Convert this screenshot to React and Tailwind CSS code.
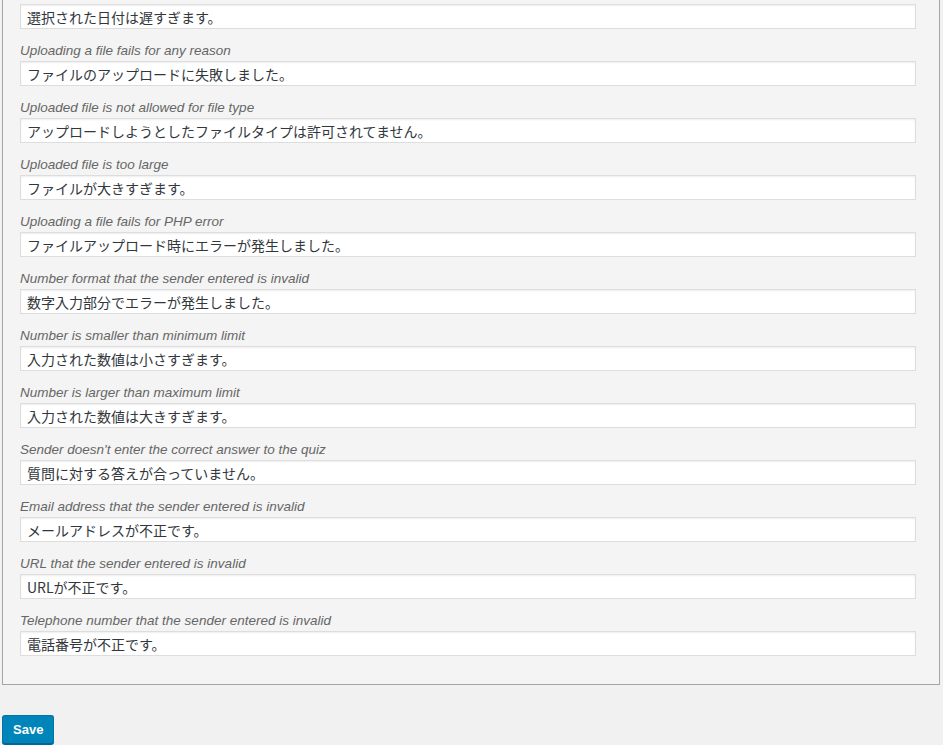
const messages = [
  { label: "", value: "選択された日付は遅すぎます。" },
  { label: "Uploading a file fails for any reason", value: "ファイルのアップロードに失敗しました。" },
  { label: "Uploaded file is not allowed for file type", value: "アップロードしようとしたファイルタイプは許可されてません。" },
  { label: "Uploaded file is too large", value: "ファイルが大きすぎます。" },
  { label: "Uploading a file fails for PHP error", value: "ファイルアップロード時にエラーが発生しました。" },
  { label: "Number format that the sender entered is invalid", value: "数字入力部分でエラーが発生しました。" },
  { label: "Number is smaller than minimum limit", value: "入力された数値は小さすぎます。" },
  { label: "Number is larger than maximum limit", value: "入力された数値は大きすぎます。" },
  { label: "Sender doesn't enter the correct answer to the quiz", value: "質問に対する答えが合っていません。" },
  { label: "Email address that the sender entered is invalid", value: "メールアドレスが不正です。" },
  { label: "URL that the sender entered is invalid", value: "URLが不正です。" },
  { label: "Telephone number that the sender entered is invalid", value: "電話番号が不正です。" },
];

export default function App() {
  return (
    <div className="min-h-[745px] bg-[#f1f1f1] pl-[2px] pr-[3px] font-['Liberation_Sans',sans-serif]">
      {/* Messages panel */}
      <div className="border-x border-b border-[#a6a6a6] bg-[#f4f4f4] pl-[17px] pr-[23px] pt-[4px] pb-[28px]">
        {messages.map((m, i) => (
          <div key={i}>
            {m.label && (
              <p className="mt-[12px] mb-[2px] h-[18px] text-[13.5px] leading-[19px] italic text-[#666]">
                {m.label}
              </p>
            )}
            <input
              type="text"
              defaultValue={m.value}
              className="block h-[25px] w-full border border-[#dddddd] bg-white px-[6px] text-[14px] leading-[23px] text-[#32373c] shadow-[inset_0_1px_2px_rgba(0,0,0,0.07)] outline-none font-['Noto_Sans_CJK_JP','Liberation_Sans',sans-serif]"
            />
          </div>
        ))}
      </div>

      <div className="mt-[30px]">
        <button
          type="button"
          className="h-[29px] rounded-[3px] border border-[#0073aa] border-b-[#006799] bg-[#0085ba] px-[10px] text-[13px] font-bold text-white shadow-[0_1px_0_#006799]"
        >
          Save
        </button>
      </div>
    </div>
  );
}
